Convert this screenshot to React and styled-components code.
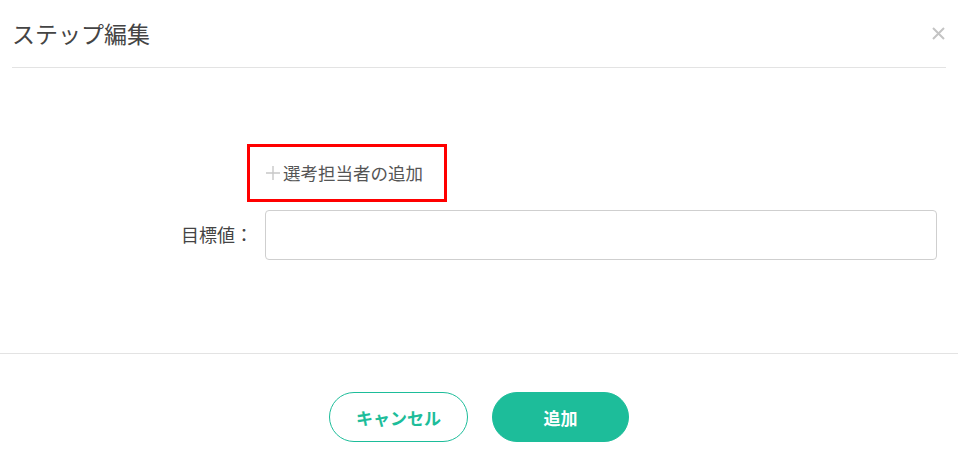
import React from "react";
import styled, { createGlobalStyle } from "styled-components";

const GlobalStyle = createGlobalStyle`
  html, body {
    margin: 0;
    padding: 0;
    background: #fff;
  }
  body {
    font-family: "Noto Sans CJK JP", "Noto Sans", sans-serif;
    color: #444;
  }
`;

const teal = "#1dbd9a";

const Modal = styled.div`
  width: 958px;
  height: 475px;
  display: flex;
  flex-direction: column;
  background: #fff;
`;

const Header = styled.div`
  margin: 0 12px;
  height: 67px;
  border-bottom: 1px solid #e3e3e3;
  display: flex;
  align-items: center;
  justify-content: space-between;
`;

const Title = styled.h2`
  margin: 0;
  font-size: 23px;
  font-weight: 400;
  color: #444;
  padding-bottom: 1px;
`;

const CloseButton = styled.button`
  border: none;
  background: none;
  padding: 0;
  width: 16px;
  height: 16px;
  display: flex;
  align-items: center;
  justify-content: center;
  cursor: pointer;
`;

const Body = styled.div`
  height: 286px;
  box-sizing: border-box;
  padding: 76px 21px 0 0;
  display: grid;
  grid-template-columns: 253px 1fr;
  align-content: start;
  column-gap: 12px;
  row-gap: 8px;
  border-bottom: 1px solid #e3e3e3;
`;

const Highlight = styled.div`
  margin-left: -18px;
  width: 200px;
  height: 58px;
  box-sizing: border-box;
  border: 3px solid #ff0000;
  display: flex;
  align-items: center;
  padding-left: 16px;
  padding-bottom: 1px;
`;

const AddLink = styled.button`
  border: none;
  background: none;
  padding: 0;
  display: flex;
  align-items: center;
  gap: 3px;
  font-family: inherit;
  font-size: 17.5px;
  color: #555;
  cursor: pointer;
`;

const Label = styled.label`
  align-self: center;
  text-align: right;
  font-size: 18px;
  color: #444;
  padding-bottom: 2px;
`;

const Input = styled.input`
  height: 50px;
  box-sizing: border-box;
  border: 1px solid #cfcfcf;
  border-radius: 4px;
  padding: 0 12px;
  font-size: 16px;
  outline: none;
`;

const Footer = styled.div`
  flex: 1;
  display: flex;
  justify-content: center;
  align-items: flex-start;
  padding-top: 38px;
  gap: 24px;
`;

const Pill = styled.button`
  height: 50px;
  width: ${(p) => p.$w}px;
  border-radius: 25px;
  box-sizing: border-box;
  border: 1px solid ${teal};
  background: ${(p) => (p.$primary ? teal : "#fff")};
  color: ${(p) => (p.$primary ? "#fff" : teal)};
  font-family: inherit;
  font-size: 17px;
  font-weight: 700;
  cursor: pointer;
`;

const App = () => {
  return (
    <>
      <GlobalStyle />
      <Modal>
        <Header>
          <Title>ステップ編集</Title>
          <CloseButton aria-label="close">
            <svg width="13" height="13" viewBox="0 0 13 13">
              <path
                d="M1 1L12 12M12 1L1 12"
                stroke="#c4c4c4"
                strokeWidth="2"
              />
            </svg>
          </CloseButton>
        </Header>
        <Body>
          <span />
          <Highlight>
            <AddLink>
              <svg width="14" height="14" viewBox="0 0 14 14">
                <path d="M7 0V14M0 7H14" stroke="#c8c8c8" strokeWidth="1.4" />
              </svg>
              選考担当者の追加
            </AddLink>
          </Highlight>
          <Label>目標値：</Label>
          <Input />
        </Body>
        <Footer>
          <Pill $w={139}>キャンセル</Pill>
          <Pill $w={137} $primary>
            追加
          </Pill>
        </Footer>
      </Modal>
    </>
  );
};

export default App;
